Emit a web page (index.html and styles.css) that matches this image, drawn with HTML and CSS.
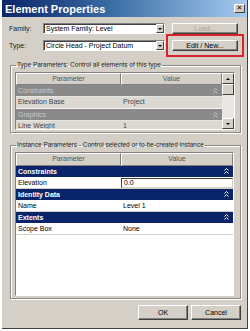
FILE: index.html
```html
<!DOCTYPE html>
<html>
<head>
<meta charset="utf-8">
<link rel="stylesheet" href="styles.css">
</head>
<body>
<div class="dialog">
  <div class="titlebar">
    <span class="title">Element Properties</span>
    <span class="close">&#x2715;</span>
  </div>
  <div class="top">
    <div class="row">
      <span class="lbl">Family:</span>
      <div class="combo"><span class="combo-text">System Family: Level</span><span class="arrow"></span></div>
      <button class="btn disabled">Load...</button>
    </div>
    <div class="row">
      <span class="lbl">Type:</span>
      <div class="combo"><span class="combo-text">Circle Head - Project Datum</span><span class="arrow"></span></div>
      <button class="btn highlighted">Edit / New...</button>
    </div>
  </div>

  <fieldset class="group group-type">
    <legend>Type Parameters: Control all elements of this type</legend>
    <div class="tablewrap type-wrap">
      <div class="grid type-grid">
        <div class="hcell">Parameter</div><div class="hcell">Value</div>
        <div class="band grey"><span>Constraints</span><svg class="chev" viewBox="0 0 5 6" width="5" height="6"><path d="M0.5 2.5 L2.5 0.5 L4.5 2.5 M0.5 5.5 L2.5 3.5 L4.5 5.5" fill="none" stroke="currentColor" stroke-width="1"/></svg></div>
        <div class="cell tp">Elevation Base</div><div class="cell tp">Project</div>
        <div class="band grey"><span>Graphics</span><svg class="chev" viewBox="0 0 5 6" width="5" height="6"><path d="M0.5 2.5 L2.5 0.5 L4.5 2.5 M0.5 5.5 L2.5 3.5 L4.5 5.5" fill="none" stroke="currentColor" stroke-width="1"/></svg></div>
        <div class="cell tp">Line Weight</div><div class="cell tp">1</div>
      </div>
      <div class="scrollbar">
        <div class="sbtn"><span class="tri up"></span></div>
        <div class="thumb"></div>
        <div class="track"></div>
        <div class="sbtn"><span class="tri down"></span></div>
      </div>
    </div>
  </fieldset>

  <fieldset class="group group-inst">
    <legend>Instance Parameters - Control selected or to-be-created instance</legend>
    <div class="tablewrap inst-wrap">
      <div class="grid inst-grid">
        <div class="hcell">Parameter</div><div class="hcell">Value</div>
        <div class="band navy"><span>Constraints</span><svg class="chev" viewBox="0 0 5 6" width="5" height="6"><path d="M0.5 2.5 L2.5 0.5 L4.5 2.5 M0.5 5.5 L2.5 3.5 L4.5 5.5" fill="none" stroke="currentColor" stroke-width="1"/></svg></div>
        <div class="cell">Elevation</div><div class="cell"><span class="editbox">0.0</span></div>
        <div class="band navy"><span>Identity Data</span><svg class="chev" viewBox="0 0 5 6" width="5" height="6"><path d="M0.5 2.5 L2.5 0.5 L4.5 2.5 M0.5 5.5 L2.5 3.5 L4.5 5.5" fill="none" stroke="currentColor" stroke-width="1"/></svg></div>
        <div class="cell">Name</div><div class="cell">Level 1</div>
        <div class="band navy"><span>Extents</span><svg class="chev" viewBox="0 0 5 6" width="5" height="6"><path d="M0.5 2.5 L2.5 0.5 L4.5 2.5 M0.5 5.5 L2.5 3.5 L4.5 5.5" fill="none" stroke="currentColor" stroke-width="1"/></svg></div>
        <div class="cell">Scope Box</div><div class="cell">None</div>
      </div>
    </div>
  </fieldset>

  <div class="buttons">
    <button class="btn dlg">OK</button>
    <button class="btn dlg">Cancel</button>
  </div>
</div>
</body>
</html>
```

FILE: styles.css
```css
* { box-sizing: border-box; }
body {
  margin: 0;
  background: #fff;
  font-family: "Liberation Sans Narrow", "Liberation Sans", Arial, sans-serif;
  font-size: 7px;
  color: #000;
}
.dialog {
  margin-left: 2px;
  width: 246px;
  height: 329px;
  background: #d4d0c8;
  border-right: 1px solid #404040;
  border-bottom: 1px solid #404040;
  display: flex;
  flex-direction: column;
}
.titlebar {
  height: 17px;
  background: linear-gradient(to right, #0a246a 0%, #3a6ea5 45%, #a6caf0 100%);
  display: flex;
  align-items: center;
  justify-content: space-between;
  padding: 0 2px 0 3px;
}
.title {
  color: #fff;
  font-family: "Liberation Sans Narrow", "Liberation Sans", sans-serif;
  font-weight: bold;
  font-size: 11px;
}
.close {
  width: 11px;
  height: 9px;
  background: #d4d0c8;
  border: 1px solid;
  border-color: #fff #404040 #404040 #fff;
  font-size: 7px;
  font-weight: bold;
  line-height: 7px;
  text-align: center;
  color: #000;
  font-family: "DejaVu Sans", sans-serif;
}
.top {
  padding: 6px 0 0 7px;
  display: flex;
  flex-direction: column;
  gap: 6px;
}
.row {
  display: flex;
  align-items: center;
  height: 11px;
}
.lbl {
  width: 34px;
  color: #222;
}
.combo {
  width: 122px;
  height: 11px;
  background: #fff;
  border: 1px solid;
  border-color: #808080 #fff #fff #808080;
  box-shadow: inset 1px 1px 0 #404040;
  display: flex;
  align-items: center;
  justify-content: space-between;
  padding-left: 2px;
}
.combo-text { line-height: 9px; }
.arrow {
  width: 8px;
  height: 9px;
  background: #d4d0c8;
  border: 1px solid;
  border-color: #fff #404040 #404040 #fff;
  display: flex;
  align-items: center;
  justify-content: center;
}
.arrow::after {
  content: "";
  border-left: 2px solid transparent;
  border-right: 2px solid transparent;
  border-top: 2px solid #000;
}
.btn {
  font-family: inherit;
  font-size: 7px;
  background: #d4d0c8;
  border: 1px solid;
  border-color: #fff #404040 #404040 #fff;
  box-shadow: inset -1px -1px 0 #808080;
  padding: 0;
  color: #000;
}
.row .btn {
  margin-left: 7px;
  width: 66px;
  height: 11px;
  line-height: 9px;
}
.btn.disabled { color: #a8a49c; }
.btn.highlighted {
  outline: 2px solid #d8242a;
  outline-offset: 4px;
}
.group {
  margin: 0;
  border: 1px solid #8f8c86;
  box-shadow: inset 1px 1px 0 #fff, 1px 1px 0 #fff;
  padding: 0 5px 0 4px;
}
.group legend {
  padding: 0 1px;
  margin-left: 1px;
  font-size: 6.5px;
  line-height: 8px;
  color: #222;
}
.group-type {
  margin: 10px 6px 0 8px;
  height: 72px;
  padding-top: 3px;
}
.group-inst {
  margin: 8px 6px 0 8px;
  height: 158px;
  padding-top: 3px;
  padding-right: 6px;
}
.tablewrap {
  display: flex;
  border: 1px solid;
  border-color: #808080 #fff #fff #808080;
  overflow: hidden;
}
.type-wrap { height: 58px; }
.inst-wrap { height: 144px; background: #fff; }
.grid {
  flex: 1;
  display: grid;
  grid-template-columns: 105px 1fr;
  align-content: start;
}
.type-grid { grid-auto-rows: 12px; background: #d4d0c8; }
.inst-grid { grid-template-rows: 13px; grid-auto-rows: 11.5px; }
.hcell {
  background: #d4d0c8;
  border: 1px solid;
  border-color: #fff #808080 #808080 #fff;
  text-align: center;
  color: #555;
  line-height: 10px;
}
.band {
  grid-column: 1 / 3;
  display: flex;
  justify-content: space-between;
  align-items: center;
  padding: 0 4px 0 2px;
  border-bottom: 1px solid #e8e6e2;
}
.band.grey { background: #8a8a8a; color: #c9c9c9; }
.band.navy { background: #0a246a; color: #fff; font-weight: bold; border-bottom-color: #fff; }
.chev { display: block; }
.cell {
  padding-left: 2px;
  line-height: 10px;
  border-bottom: 1px solid #e4e2de;
  white-space: nowrap;
  overflow: hidden;
}
.cell.tp { background: #dcd9d3; color: #444; border-bottom-color: #f4f3f1; }
.inst-grid .cell { background: #fff; border-bottom-color: #d4d0c8; }
.editbox {
  display: block;
  margin-left: -2px;
  padding-left: 2px;
  height: 100%;
  border: 1px solid;
  border-color: #404040 #d4d0c8 #d4d0c8 #404040;
  line-height: 8px;
}
.scrollbar {
  width: 12px;
  display: flex;
  flex-direction: column;
  background: #e9e7e3;
}
.sbtn {
  height: 11px;
  background: #d4d0c8;
  border: 1px solid;
  border-color: #fff #404040 #404040 #fff;
  display: flex;
  align-items: center;
  justify-content: center;
}
.thumb {
  height: 11px;
  background: #d4d0c8;
  border: 1px solid;
  border-color: #fff #404040 #404040 #fff;
}
.track { flex: 1; }
.tri {
  border-left: 2px solid transparent;
  border-right: 2px solid transparent;
}
.tri.up { border-bottom: 2px solid #000; }
.tri.down { border-top: 2px solid #000; }
.buttons {
  display: flex;
  justify-content: flex-end;
  gap: 3px;
  padding: 6px 6px 0 0;
}
.btn.dlg {
  width: 50px;
  height: 15px;
}
```
